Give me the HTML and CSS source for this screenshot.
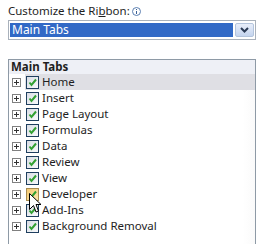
FILE: index.html
```html
<!DOCTYPE html>
<html lang="en">
<head>
  <meta charset="UTF-8">
  <title>Customize the Ribbon</title>
  <link rel="stylesheet" href="styles.css">
</head>
<body>
  <div class="panel">
    <div class="caption">
      <span>Customize the Ri<u>b</u>bon:</span><svg class="info" width="9" height="9" viewBox="0 0 9 9">
        <circle cx="4.5" cy="4.5" r="4" fill="#fff" stroke="#5b7fb0"/>
        <rect x="4" y="2" width="1" height="1" fill="#3a5f95"/>
        <rect x="4" y="4" width="1" height="3" fill="#3a5f95"/>
      </svg>
    </div>

    <div class="combo">
      <div class="combo-value">Main Tabs</div>
      <div class="combo-btn">
        <svg width="9" height="6" viewBox="0 0 9 6">
          <path d="M1 1 L4.5 4.5 L8 1" fill="none" stroke="#2b3b55" stroke-width="2"/>
        </svg>
      </div>
    </div>

    <div class="tree">
      <div class="tree-head">Main Tabs</div>
      <!-- tab rows -->
      <div class="row selected"><span class="plus"></span><span class="check"></span><span class="name">Home</span></div>
      <div class="row"><span class="plus"></span><span class="check"></span><span class="name">Insert</span></div>
      <div class="row"><span class="plus"></span><span class="check"></span><span class="name">Page Layout</span></div>
      <div class="row"><span class="plus"></span><span class="check"></span><span class="name">Formulas</span></div>
      <div class="row"><span class="plus"></span><span class="check"></span><span class="name">Data</span></div>
      <div class="row"><span class="plus"></span><span class="check"></span><span class="name">Review</span></div>
      <div class="row"><span class="plus"></span><span class="check"></span><span class="name">View</span></div>
      <div class="row"><span class="plus"></span><span class="check hover"></span><span class="name">Developer</span></div>
      <div class="row"><span class="plus"></span><span class="check"></span><span class="name">Add-Ins</span></div>
      <div class="row"><span class="plus"></span><span class="check"></span><span class="name">Background Removal</span></div>

      <svg class="cursor" width="13" height="21" viewBox="0 0 13 21">
        <path d="M0.5 0.5 L0.5 16.5 L4.5 12.5 L7 19 L9.5 18 L7 11.5 L12 11.5 Z" fill="#fff" stroke="#000" stroke-width="1"/>
      </svg>
    </div>
  </div>
</body>
</html>
```

FILE: styles.css
```css
body {
  margin: 0;
  background: #ffffff;
  font-family: "Noto Sans", "Open Sans", sans-serif;
  font-size: 11.5px;
  color: #1e1e1e;
}

.panel {
  padding: 3px 7px 0 8px;
}

.caption {
  height: 17px;
  line-height: 15px;
}
.info {
  margin-left: 2px;
  vertical-align: -1px;
}

.combo {
  display: flex;
  height: 16px;
  border: 1px solid #a9b1bb;
  padding: 1px;
}
.combo-value {
  flex: 1;
  background: #3169c6;
  color: #ffffff;
  padding-left: 2px;
  line-height: 14px;
  font-size: 12px;
  margin: 1px 2px 1px 0;
}
.combo-btn {
  width: 17px;
  display: flex;
  align-items: center;
  justify-content: center;
  margin: 1px 0;
  border: 1px solid #b3c4dc;
  border-radius: 2px;
  background: linear-gradient(#e8eefa, #c4d4ee);
}

.tree {
  position: relative;
  margin-top: 19px;
  height: 190px;
  border: 1px solid #8e9aa6;
  border-bottom: none;
  background: linear-gradient(90deg, #ffffff 95%, #fafafa);
}

.tree-head {
  height: 14px;
  line-height: 14px;
  background: #eef0f6;
  font-weight: bold;
  padding-left: 2px;
}

.row {
  height: 16px;
  display: flex;
  align-items: center;
}
.row.selected {
  background: linear-gradient(90deg, transparent 16px, #dfdfe4 16px);
}

.plus {
  width: 7px;
  height: 7px;
  margin-left: 3px;
  margin-right: 5px;
  border: 1px solid #808080;
  background:
    linear-gradient(#333, #333) center / 5px 1px no-repeat,
    linear-gradient(#333, #333) center / 1px 5px no-repeat,
    #ffffff;
}

.check {
  width: 11px;
  height: 11px;
  border: 1px solid #1f3f5f;
  background:
    url("data:image/svg+xml,%3Csvg xmlns='http://www.w3.org/2000/svg' width='11' height='11'%3E%3Cpath d='M2.5 5.5 L4.5 8 L9 2.5' fill='none' stroke='%2332a032' stroke-width='2'/%3E%3C/svg%3E") center no-repeat,
    linear-gradient(135deg, #d9dde4, #f8f9fb);
}
.check.hover {
  border-color: #a88c50;
  background:
    url("data:image/svg+xml,%3Csvg xmlns='http://www.w3.org/2000/svg' width='11' height='11'%3E%3Cpath d='M2.5 5.5 L4.5 8 L9 2.5' fill='none' stroke='%2332a032' stroke-width='2'/%3E%3C/svg%3E") center no-repeat,
    linear-gradient(135deg, #f5c870, #fde8b0);
}

.name {
  padding: 0 2px;
  margin-left: 1px;
  line-height: 16px;
}

.cursor {
  position: absolute;
  left: 20px;
  top: 133px;
}
```
